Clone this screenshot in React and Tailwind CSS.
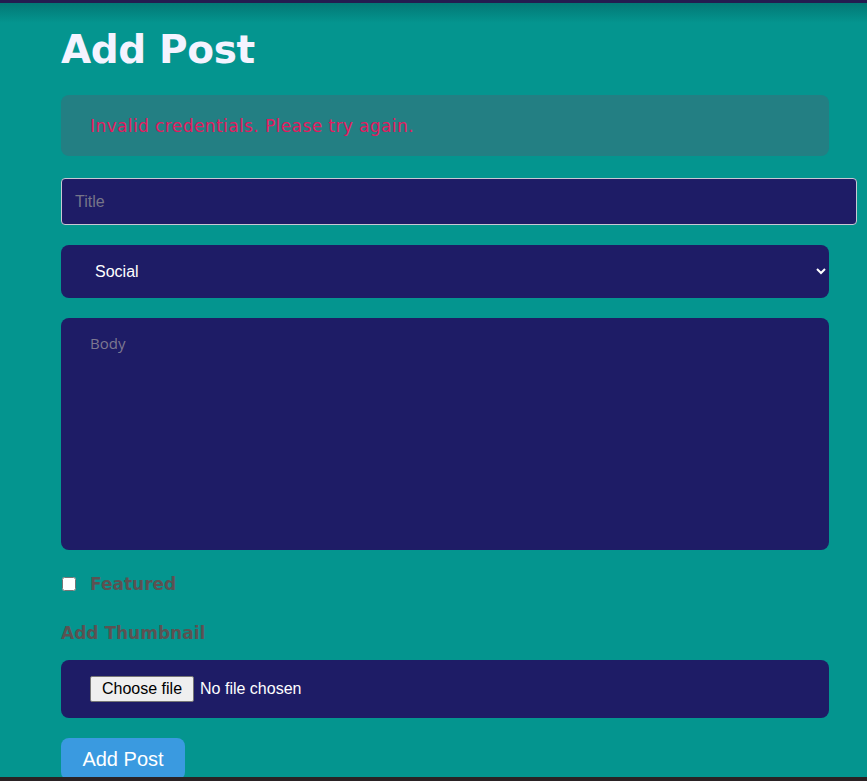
import React from 'react';

const App = () => {
    return (
        <div className="h-[781px] overflow-hidden flex flex-col bg-[#04958f]">
            <div className="h-[3px] shrink-0 bg-[#241c50]" />
            <div className="flex-1 min-h-0 overflow-hidden bg-gradient-to-b from-[#037875] via-[#04958f] to-[#04958f] bg-[length:100%_40px] bg-no-repeat">
                <div className="pl-[61px] w-[829px]">
                    <h1 className="pt-[23px] text-[39px] leading-[48px] font-bold text-[#f4f3ff] font-['DejaVu_Sans',sans-serif] tracking-[-0.01em]">Add Post</h1>
                    <div className="mt-[21px] h-[61px] rounded-lg bg-[#237f83] pl-[29px] flex items-center">
                        <p className="text-[17px] tracking-[0.4px] pt-[2px] text-[#e41a5f] font-['DejaVu_Sans',sans-serif]">Invalid credentials. Please try again.</p>
                    </div>
                    <input
                        type="text"
                        placeholder="Title"
                        className="mt-[22px] block w-[796px] h-[47px] rounded border border-[#c8c8d4] bg-[#1e1c66] px-[13px] text-base text-white placeholder:text-[#767589] font-['Liberation_Sans',sans-serif] outline-none"
                    />
                    <select
                        defaultValue="Social"
                        className="mt-[20px] block w-full h-[53px] rounded-lg bg-[#1e1c66] pl-[30px] pr-[8px] text-base text-white font-['Liberation_Sans',sans-serif] outline-none"
                    >
                        <option>Social</option>
                        <option>Tech</option>
                        <option>News</option>
                    </select>
                    <textarea
                        placeholder="Body"
                        className="mt-[20px] block w-full h-[232px] rounded-lg bg-[#1e1c66] px-[29px] py-[14px] text-[15px] text-white placeholder:text-[#7d7890] font-['Open_Sans',sans-serif] outline-none resize-none"
                    />
                    <label className="mt-[24px] h-[20px] flex items-center gap-[14px]">
                        <input type="checkbox" className="w-[14px] h-[14px] ml-px" />
                        <span className="text-[17px] leading-[20px] font-bold text-[#5b5252] font-['DejaVu_Sans',sans-serif]">Featured</span>
                    </label>
                    <h3 className="mt-[29px] text-[17px] leading-[20px] font-bold text-[#5b5252] font-['DejaVu_Sans',sans-serif]">Add Thumbnail</h3>
                    <div className="mt-[17px] h-[58px] rounded-lg bg-[#1e1c66] pl-[29px] flex items-center gap-[6px] font-['Liberation_Sans',sans-serif] text-base">
                        <span className="h-[26px] px-[11px] flex items-center bg-[#efefef] border border-[#767676] rounded-[2px] text-black">Choose file</span>
                        <span className="text-white">No file chosen</span>
                    </div>
                    <button className="mt-[20px] w-[124px] h-[42px] rounded-lg bg-[#3a9ae0] text-[20px] text-white font-['Liberation_Sans',sans-serif]">Add Post</button>
                </div>
            </div>
            <div className="h-[4px] shrink-0 bg-[#2a2224]" />
        </div>
    );
};

export default App;
